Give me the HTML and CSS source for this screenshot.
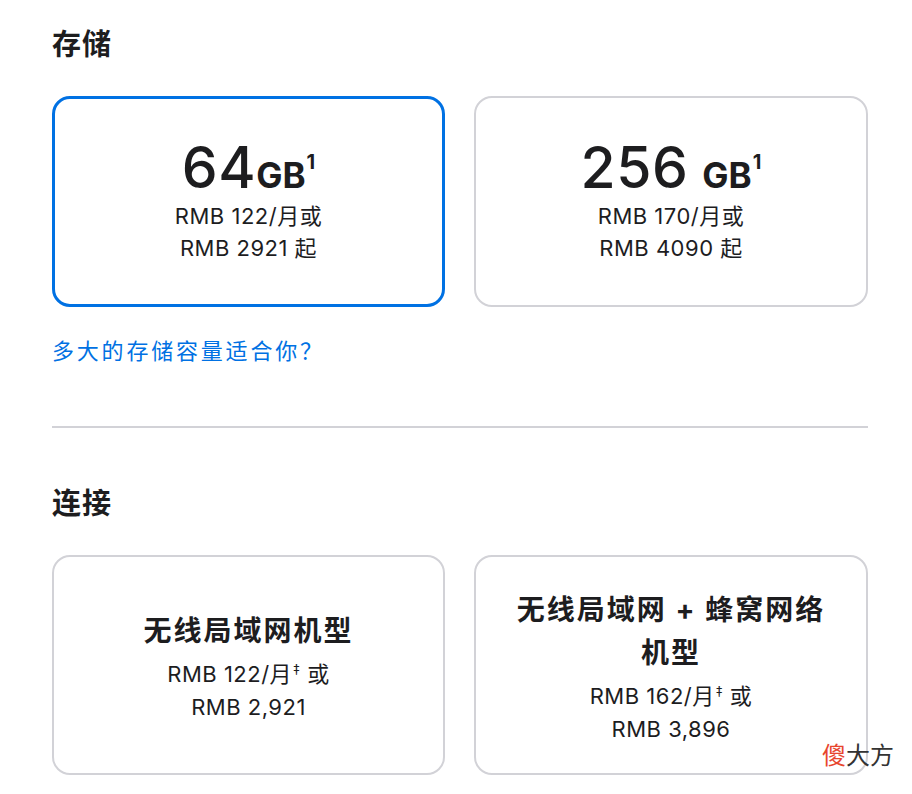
FILE: index.html
```html
<!DOCTYPE html>
<html lang="zh-CN">
<head>
<meta charset="utf-8">
<link rel="stylesheet" href="styles.css">
</head>
<body>
<main class="page">
  <section class="section storage">
    <h2 class="heading">存储</h2>
    <div class="grid">
      <div class="card selected">
        <div class="cap"><span class="num">64</span><span class="unit">GB</span><sup class="sup">1</sup></div>
        <div class="price">RMB 122/月或</div>
        <div class="price">RMB 2921 起</div>
      </div>
      <div class="card">
        <div class="cap"><span class="num">256</span><span class="unit sp">GB</span><sup class="sup">1</sup></div>
        <div class="price">RMB 170/月或</div>
        <div class="price">RMB 4090 起</div>
      </div>
    </div>
    <a class="link" href="#">多大的存储容量适合你？</a>
  </section>
  <hr class="divider">
  <section class="section connect">
    <h2 class="heading">连接</h2>
    <div class="grid">
      <div class="card tall">
        <div class="title">无线局域网机型</div>
        <div class="price">RMB 122/月<sup class="dd">‡</sup> 或</div>
        <div class="price">RMB 2,921</div>
      </div>
      <div class="card tall">
        <div class="title">无线局域网 + 蜂窝网络<br>机型</div>
        <div class="price">RMB 162/月<sup class="dd">‡</sup> 或</div>
        <div class="price">RMB 3,896</div>
      </div>
    </div>
  </section>
  <div class="mark"><span class="red">傻</span>大方</div>
</main>
</body>
</html>
```
FILE: styles.css
```css
* { box-sizing: border-box; }
html, body { margin: 0; padding: 0; background: #fff; }
body {
  font-family: Inter, "Noto Sans CJK SC", "Noto Sans", sans-serif;
  color: #1d1d1f;
  width: 912px;
  height: 794px;
  overflow: hidden;
}
.page {
  position: relative;
  padding: 26px 44px 0 52px;
  height: 794px;
}
.heading {
  margin: 0;
  font-size: 29px;
  line-height: 38px;
  font-weight: 700;
  letter-spacing: 1px;
}
.grid {
  display: grid;
  grid-template-columns: 393px 394px;
  column-gap: 29px;
  margin-top: 32px;
}
.card {
  border: 2px solid #d2d2d7;
  border-radius: 18px;
  height: 211px;
  display: flex;
  flex-direction: column;
  align-items: center;
  justify-content: center;
  text-align: center;
  padding-bottom: 2px;
}
.card.selected {
  border: 3px solid #0071e3;
}
.cap {
  line-height: 48px;
  margin-top: 6px;
  margin-bottom: -6px;
  white-space: nowrap;
}
.num {
  font-size: 57px;
  font-weight: 500;
  letter-spacing: 0.5px;
}
.unit {
  font-size: 35px;
  font-weight: 700;
}
.unit.sp { margin-left: 14px; }
.sup {
  font-size: 20px;
  font-weight: 700;
  vertical-align: top;
  position: relative;
  top: -6px;
  margin-left: 1px;
}
.price {
  font-size: 22px;
  line-height: 32px;
  letter-spacing: 0.5px;
}
.dd {
  font-size: 14px;
  vertical-align: top;
  position: relative;
  top: -5px;
  margin-left: 1px;
}
.link {
  display: block;
  margin-top: 30px;
  color: #0071e3;
  text-decoration: none;
  font-size: 22px;
  line-height: 28px;
  letter-spacing: 2.8px;
}
.divider {
  margin: 61px 0 0 0;
  border: 0;
  height: 2px;
  background: #d2d2d7;
}
.connect .heading { margin-top: 57px; }
.connect .grid { margin-top: 32px; }
.card.tall { height: 220px; padding-top: 4px; padding-bottom: 0; }
.title {
  font-size: 28px;
  font-weight: 700;
  line-height: 43px;
  letter-spacing: 2px;
  margin-bottom: 5px;
}
.connect .price { line-height: 33px; }
.mark {
  position: absolute;
  left: 822px;
  top: 736px;
  font-size: 24px;
  line-height: 36px;
  color: #333;
  font-family: "Noto Sans CJK SC", sans-serif;
}
.mark .red { color: #e8462e; }
```
